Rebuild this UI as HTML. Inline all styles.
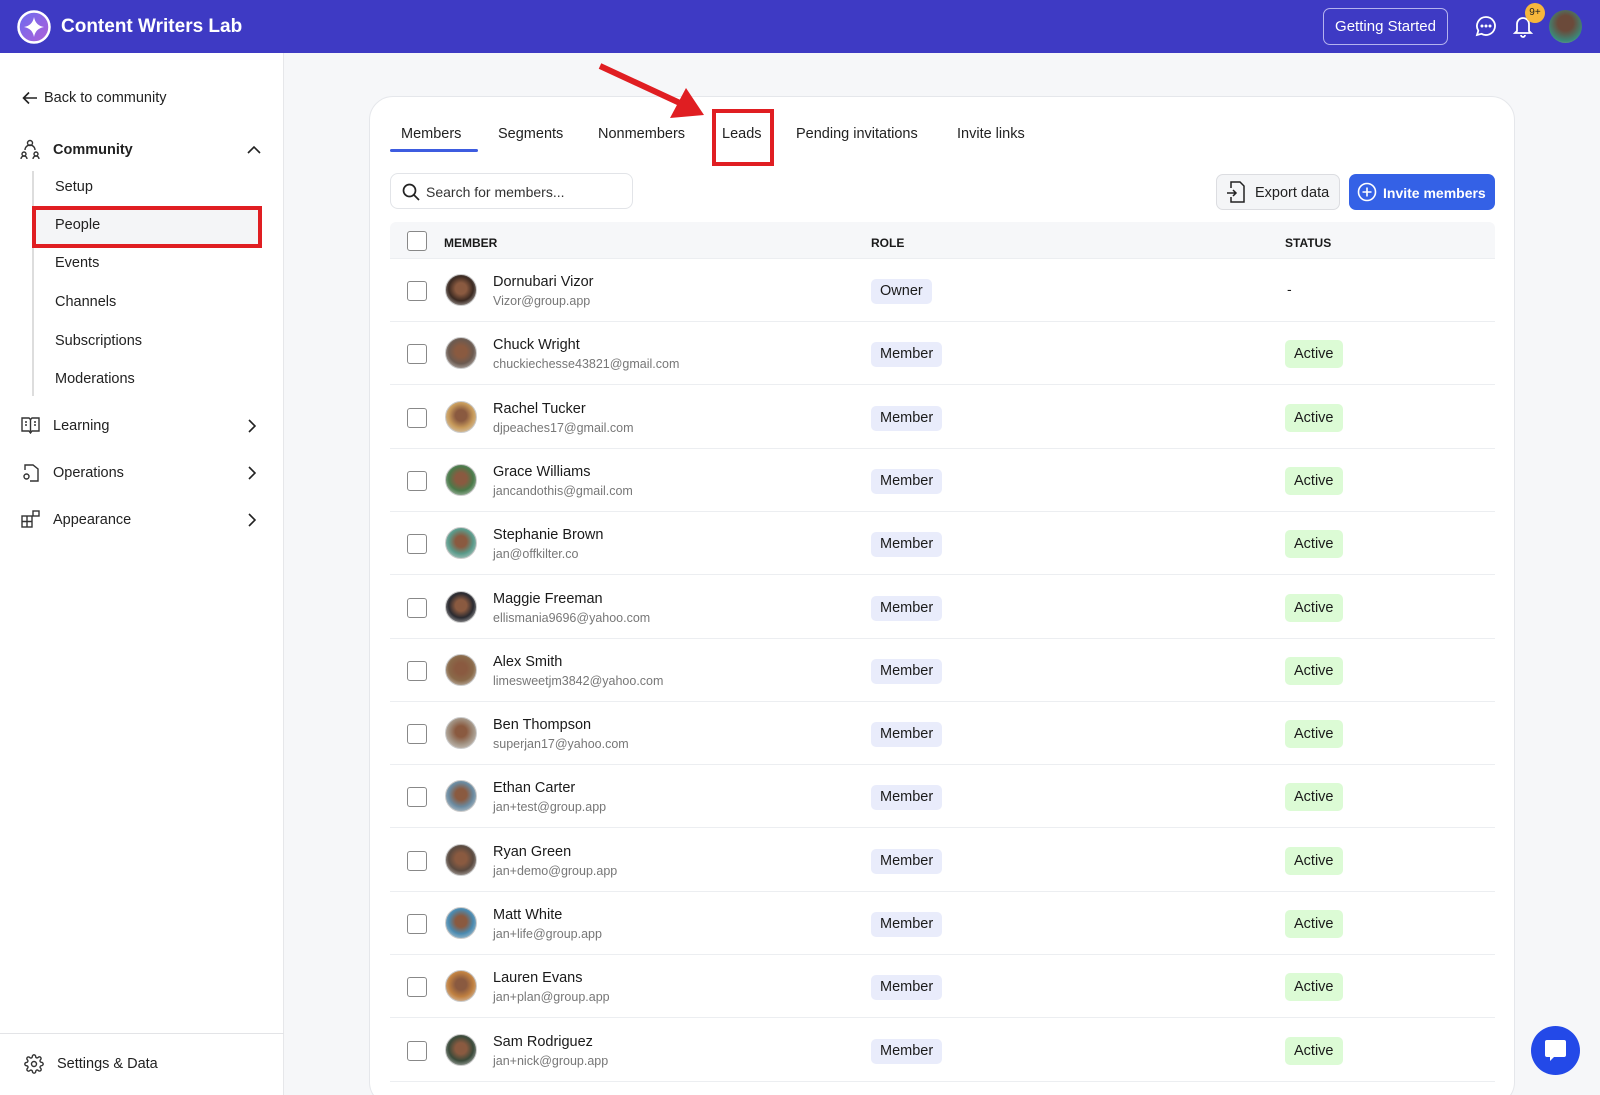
<!DOCTYPE html>
<html><head><meta charset="utf-8"><style>
*{box-sizing:border-box;margin:0;padding:0}
html,body{width:1600px;height:1095px;overflow:hidden}
body{background:#f6f7f9;font-family:"Liberation Sans",Arial,sans-serif;color:#1a1a1a;position:relative}
.abs{position:absolute}
.hdr{left:0;top:0;width:1600px;height:53px;background:#3e3ac4}
.side{left:0;top:53px;width:284px;height:1042px;background:#fff;border-right:1px solid #e6e7ea}
.nav{position:absolute;font-size:14.5px;color:#222}
.card{left:369px;top:96px;width:1146px;height:1010px;background:#fff;border:1px solid #e5e7eb;border-radius:24px}
.tab{position:absolute;top:126px;font-size:14.5px;color:#222}
.row{position:absolute;left:390px;width:1105px;height:63px;border-bottom:1px solid #eceef1;background:#fff}
.cb{position:absolute;left:17px;width:20px;height:20px;border:1.5px solid #888;border-radius:3px;background:#fff}
.av{position:absolute;left:55px;width:32px;height:32px;border-radius:50%;border:1.5px solid #ccc}
.nm{position:absolute;left:103px;font-size:14.5px;color:#1a1a1a}
.em{position:absolute;left:103px;font-size:12.5px;color:#777}
.role{position:absolute;left:481px;height:25px;line-height:25px;padding:0 9px;background:#e9ecfb;border-radius:5px;font-size:14.5px}
.st{position:absolute;left:895px;height:28px;line-height:28px;padding:0 9px;background:#dcfbd5;border-radius:5px;font-size:14.5px}
.chev{position:absolute;left:247px}
</style></head><body>
<div class="abs hdr">
 <svg class="abs" style="left:17px;top:10px" width="34" height="34" viewBox="0 0 34 34"><defs><linearGradient id="g" x1="0" y1="0" x2="1" y2="1"><stop offset="0" stop-color="#6a6cf0"/><stop offset="1" stop-color="#b05fd8"/></linearGradient></defs><circle cx="17" cy="17" r="15.5" fill="url(#g)" stroke="#fff" stroke-width="2.5"/><path d="M17 7 Q18.5 15.5 27 17 Q18.5 18.5 17 27 Q15.5 18.5 7 17 Q15.5 15.5 17 7Z" fill="#fff"/></svg>
 <div class="abs" style="left:61px;top:16px;color:#fff;font-size:19px;font-weight:bold">Content Writers Lab</div>
 <div class="abs" style="left:1323px;top:8px;width:125px;height:37px;border:1.5px solid #b5b3ee;border-radius:7px;color:#fff;font-size:15px;display:flex;align-items:center;justify-content:center">Getting Started</div>
 <svg class="abs" style="left:1475px;top:15px" width="22" height="22" viewBox="0 0 22 22" fill="none" stroke="#fff" stroke-width="1.8"><path d="M11 2a9 9 0 1 1-4.5 16.8L2 20l1.3-4.3A9 9 0 0 1 11 2z"/><circle cx="7" cy="11" r=".6" fill="#fff"/><circle cx="11" cy="11" r=".6" fill="#fff"/><circle cx="15" cy="11" r=".6" fill="#fff"/></svg>
 <svg class="abs" style="left:1512px;top:14px" width="22" height="24" viewBox="0 0 22 24" fill="none" stroke="#fff" stroke-width="1.8"><path d="M5 17V10a6 6 0 0 1 12 0v7l2 2H3z"/><path d="M9 21a2 2 0 0 0 4 0"/></svg>
 <div class="abs" style="left:1525px;top:3px;width:20px;height:20px;border-radius:50%;background:#f6b73c;font-size:10px;text-align:center;line-height:20px;color:#222">9+</div>
 <div class="abs" style="left:1549px;top:10px;width:33px;height:33px;border-radius:50%;background:radial-gradient(circle at 50% 40%,#6b4a3a 30%,#3a8a7a 70%,#c9a79a)"></div>
</div>
<div class="abs side">
 <svg class="abs" style="left:22px;top:38px" width="16" height="14" viewBox="0 0 16 14" fill="none" stroke="#222" stroke-width="1.6"><path d="M15 7H2M7 1.5L1.5 7 7 12.5"/></svg>
 <div class="nav" style="left:44px;top:37px">Back to community</div>
 <svg class="abs" style="left:20px;top:86px" width="20" height="20" viewBox="0 0 20 20" fill="none" stroke="#333" stroke-width="1.4"><circle cx="10" cy="4" r="2.5"/><path d="M5 11a5 5 0 0 1 10 0"/><circle cx="4" cy="15" r="2"/><circle cx="16" cy="15" r="2"/><path d="M1 20a3 3 0 0 1 6 0M13 20a3 3 0 0 1 6 0"/></svg>
 <div class="nav" style="left:53px;top:89px;font-weight:bold">Community</div>
 <svg class="chev" style="top:92px" width="14" height="9" viewBox="0 0 14 9" fill="none" stroke="#222" stroke-width="1.6"><path d="M1 8l6-6 6 6"/></svg>
 <div class="abs" style="left:32px;top:118px;width:1.5px;height:225px;background:#ddd"></div>
 <div class="nav" style="left:55px;top:126px">Setup</div>
 <div class="abs" style="left:32px;top:153px;width:230px;height:42px;border:4px solid #e01e22;background:#f4f5f7"></div>
 <div class="nav" style="left:55px;top:164px">People</div>
 <div class="nav" style="left:55px;top:202px">Events</div>
 <div class="nav" style="left:55px;top:241px">Channels</div>
 <div class="nav" style="left:55px;top:280px">Subscriptions</div>
 <div class="nav" style="left:55px;top:318px">Moderations</div>
 <svg class="abs" style="left:21px;top:364px" width="19" height="17" viewBox="0 0 19 17" fill="none" stroke="#333" stroke-width="1.4"><path d="M1 1h7l1.5 1.5L11 1h7v13h-7l-1.5 2L8 14H1z"/><path d="M9.5 2.5v12M4 5h2M4 8h2M13 5h2M13 8h2"/></svg>
 <div class="nav" style="left:53px;top:365px">Learning</div>
 <svg class="chev" style="top:366px" width="9" height="14" viewBox="0 0 9 14" fill="none" stroke="#222" stroke-width="1.6"><path d="M2 1l6 6-6 6"/></svg>
 <svg class="abs" style="left:22px;top:410px" width="18" height="19" viewBox="0 0 18 19" fill="none" stroke="#333" stroke-width="1.4"><path d="M3 7V2h8l5 4v12H8"/><circle cx="4.5" cy="13.5" r="2.5"/></svg>
 <div class="nav" style="left:53px;top:412px">Operations</div>
 <svg class="chev" style="top:413px" width="9" height="14" viewBox="0 0 9 14" fill="none" stroke="#222" stroke-width="1.6"><path d="M2 1l6 6-6 6"/></svg>
 <svg class="abs" style="left:21px;top:457px" width="19" height="18" viewBox="0 0 19 18" fill="none" stroke="#333" stroke-width="1.4"><rect x="1" y="6" width="10" height="11"/><path d="M1 11.5h10M6 6v11"/><rect x="12" y="1" width="6" height="5"/></svg>
 <div class="nav" style="left:53px;top:459px">Appearance</div>
 <svg class="chev" style="top:460px" width="9" height="14" viewBox="0 0 9 14" fill="none" stroke="#222" stroke-width="1.6"><path d="M2 1l6 6-6 6"/></svg>
 <div class="abs" style="left:0;top:980px;width:284px;height:1px;background:#e3e4e7"></div>
 <svg class="abs" style="left:24px;top:1001px" width="20" height="20" viewBox="0 0 24 24" fill="none" stroke="#333" stroke-width="1.7"><circle cx="12" cy="12" r="3"/><path d="M19.4 15a1.7 1.7 0 0 0 .3 1.8l.1.1a2 2 0 1 1-2.8 2.8l-.1-.1a1.7 1.7 0 0 0-1.8-.3 1.7 1.7 0 0 0-1 1.5V21a2 2 0 1 1-4 0v-.1a1.7 1.7 0 0 0-1.1-1.5 1.7 1.7 0 0 0-1.8.3l-.1.1a2 2 0 1 1-2.8-2.8l.1-.1a1.7 1.7 0 0 0 .3-1.8 1.7 1.7 0 0 0-1.5-1H3a2 2 0 1 1 0-4h.1a1.7 1.7 0 0 0 1.5-1.1 1.7 1.7 0 0 0-.3-1.8l-.1-.1a2 2 0 1 1 2.8-2.8l.1.1a1.7 1.7 0 0 0 1.8.3H9a1.7 1.7 0 0 0 1-1.5V3a2 2 0 1 1 4 0v.1a1.7 1.7 0 0 0 1 1.5 1.7 1.7 0 0 0 1.8-.3l.1-.1a2 2 0 1 1 2.8 2.8l-.1.1a1.7 1.7 0 0 0-.3 1.8V9a1.7 1.7 0 0 0 1.5 1H21a2 2 0 1 1 0 4h-.1a1.7 1.7 0 0 0-1.5 1z"/></svg>
 <div class="nav" style="left:57px;top:1003px">Settings &amp; Data</div>
</div>
<div class="abs card"></div>
<div class="tab" style="left:401px">Members</div>
<div class="abs" style="left:390px;top:149px;width:88px;height:3px;background:#3d5ce0;border-radius:2px"></div>
<div class="tab" style="left:498px">Segments</div>
<div class="tab" style="left:598px">Nonmembers</div>
<div class="tab" style="left:722px">Leads</div>
<div class="tab" style="left:796px">Pending invitations</div>
<div class="tab" style="left:957px">Invite links</div>
<div class="abs" style="left:712px;top:109px;width:62px;height:57px;border:4px solid #e01e22"></div>
<svg class="abs" style="left:590px;top:60px" width="130" height="70" viewBox="0 0 130 70"><line x1="10" y1="6" x2="92" y2="44" stroke="#e01e22" stroke-width="6"/><polygon points="114,55 80,58 96,28" fill="#e01e22"/></svg>
<div class="abs" style="left:390px;top:173px;width:243px;height:36px;border:1px solid #e2e4e8;border-radius:8px;background:#fff"></div>
<svg class="abs" style="left:402px;top:183px" width="18" height="18" viewBox="0 0 18 18" fill="none" stroke="#222" stroke-width="1.7"><circle cx="7.5" cy="7.5" r="6"/><path d="M12 12l5 5"/></svg>
<div class="abs" style="left:426px;top:184px;font-size:14px;color:#333">Search for members...</div>
<div class="abs" style="left:1216px;top:174px;width:124px;height:36px;border:1px solid #dcdde1;border-radius:7px;background:#f4f5f7"></div>
<svg class="abs" style="left:1226px;top:181px" width="20" height="22" viewBox="0 0 20 22" fill="none" stroke="#222" stroke-width="1.5"><path d="M5 7V1h9l4 4v16H5v-5"/><path d="M1 12h9M7 9l3 3-3 3"/></svg>
<div class="abs" style="left:1255px;top:185px;font-size:14.5px;color:#222">Export data</div>
<div class="abs" style="left:1349px;top:174px;width:146px;height:36px;border-radius:7px;background:#3461e6"></div>
<svg class="abs" style="left:1357px;top:182px" width="20" height="20" viewBox="0 0 20 20" fill="none" stroke="#fff" stroke-width="1.6"><circle cx="10" cy="10" r="8.5"/><path d="M10 5.5v9M5.5 10h9"/></svg>
<div class="abs" style="left:1383px;top:185px;font-size:14px;color:#fff;font-weight:bold">Invite members</div>
<div class="abs" style="left:390px;top:222px;width:1105px;height:37px;background:#f6f7f9;border-radius:6px 6px 0 0;border-bottom:1px solid #eceef1"></div>
<div class="cb" style="top:231px;left:407px"></div>
<div class="abs" style="left:444px;top:236px;font-size:12px;font-weight:bold">MEMBER</div>
<div class="abs" style="left:871px;top:236px;font-size:12px;font-weight:bold">ROLE</div>
<div class="abs" style="left:1285px;top:236px;font-size:12px;font-weight:bold">STATUS</div>
<div id="rows"></div>
<script>
var d=[["Dornubari Vizor","Vizor@group.app","Owner"],["Chuck Wright","chuckiechesse43821@gmail.com"],["Rachel Tucker","djpeaches17@gmail.com"],["Grace Williams","jancandothis@gmail.com"],["Stephanie Brown","jan@offkilter.co"],["Maggie Freeman","ellismania9696@yahoo.com"],["Alex Smith","limesweetjm3842@yahoo.com"],["Ben Thompson","superjan17@yahoo.com"],["Ethan Carter","jan+test@group.app"],["Ryan Green","jan+demo@group.app"],["Matt White","jan+life@group.app"],["Lauren Evans","jan+plan@group.app"],["Sam Rodriguez","jan+nick@group.app"]];
var cols=["#3b2a22","#6b5a50","#c79a5a","#4a7a4a","#5a9a8a","#2a2a30","#8a6a4a","#a09080","#6a8aa0","#5a4a40","#4a8ab0","#c08040","#3a4a3a","#888"];
var h="";
for(var i=0;i<d.length;i++){var t=259+i*63.3;
h+='<div class="row" style="top:'+t+'px"><div class="cb" style="top:22px"></div>';
h+='<div class="av" style="top:15px;background:radial-gradient(circle at 50% 45%,#8a5a40 25%,'+cols[i]+' 55%,#ddd)"></div>'+
'<div class="nm" style="top:15px">'+d[i][0]+'</div><div class="em" style="top:35px">'+d[i][1]+'</div>'+
'<div class="role" style="top:20px">'+(d[i][2]||"Member")+'</div>'+
(d[i][2]?'<div class="abs" style="left:897px;top:22px;font-size:14px">-</div>':'<div class="st" style="top:18px">Active</div>');
h+='</div>';}
document.getElementById("rows").outerHTML=h;
</script>
<div class="abs" style="left:1531px;top:1026px;width:49px;height:49px;border-radius:50%;background:#2349e8"></div>
<svg class="abs" style="left:1543px;top:1038px" width="25" height="25" viewBox="0 0 25 25"><path d="M4 2h17a2 2 0 0 1 2 2v13a2 2 0 0 1-2 2H11l-4 4v-4H4a2 2 0 0 1-2-2V4a2 2 0 0 1 2-2z" fill="#fff"/></svg>
</body></html>
